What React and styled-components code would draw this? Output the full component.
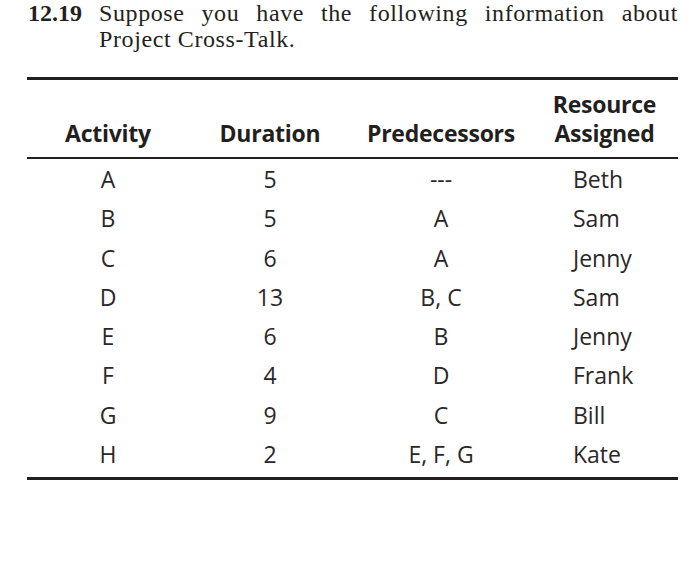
import React from 'react';
import styled, { createGlobalStyle } from 'styled-components';

const GlobalStyle = createGlobalStyle`
  html, body {
    margin: 0;
    padding: 0;
    background: #ffffff;
  }
`;

const Page = styled.div`
  width: 698px;
  height: 564px;
  color: #231f20;
`;

const Problem = styled.div`
  display: flex;
  padding: 0 20px 0 28px;
  font-family: "Liberation Serif", "Times New Roman", serif;
  font-size: 24px;
  line-height: 26px;
  letter-spacing: 0.6px;
`;

const Number = styled.span`
  flex: 0 0 71px;
  font-weight: 700;
  letter-spacing: 0;
`;

const Statement = styled.p`
  flex: 1;
  margin: 0;
  text-align: justify;
`;

const JustifiedLine = styled.span`
  display: block;
  text-align-last: justify;
`;

const Table = styled.div`
  margin: 25px 20px 0 27px;
  width: 651px;
  border-top: 3px solid #231f20;
  border-bottom: 3px solid #231f20;
  padding-bottom: 3px;
  font-family: "Open Sans", "Liberation Sans", sans-serif;
`;

const Row = styled.div`
  display: grid;
  grid-template-columns: 162px 162px 180px 147px;
`;

const HeadRow = styled(Row)`
  align-items: end;
  padding: 10px 0 9px;
  margin-bottom: 1px;
  border-bottom: 2px solid #231f20;
`;

const HeadCell = styled.div`
  font-size: 23px;
  font-weight: 700;
  line-height: 29px;
  letter-spacing: -0.25px;
  text-align: center;
  color: #231f20;
`;

const Cell = styled.div`
  height: 39.3px;
  font-size: 23px;
  line-height: 39.3px;
  font-weight: 400;
  color: #2b2728;
  text-align: ${(p) => (p.$left ? 'left' : 'center')};
  padding-left: ${(p) => (p.$left ? '42px' : '0')};
`;

const activities = [
  { id: 'A', duration: 5, pred: '---', who: 'Beth' },
  { id: 'B', duration: 5, pred: 'A', who: 'Sam' },
  { id: 'C', duration: 6, pred: 'A', who: 'Jenny' },
  { id: 'D', duration: 13, pred: 'B, C', who: 'Sam' },
  { id: 'E', duration: 6, pred: 'B', who: 'Jenny' },
  { id: 'F', duration: 4, pred: 'D', who: 'Frank' },
  { id: 'G', duration: 9, pred: 'C', who: 'Bill' },
  { id: 'H', duration: 2, pred: 'E, F, G', who: 'Kate' },
];

const App = () => (
  <Page>
    <GlobalStyle />
    <Problem>
      <Number>12.19</Number>
      <Statement>
        <JustifiedLine>Suppose you have the following information about</JustifiedLine>
        Project Cross-Talk.
      </Statement>
    </Problem>
    <Table>
      <HeadRow>
        <HeadCell>Activity</HeadCell>
        <HeadCell>Duration</HeadCell>
        <HeadCell>Predecessors</HeadCell>
        <HeadCell>
          Resource
          <br />
          Assigned
        </HeadCell>
      </HeadRow>
      {activities.map((a) => (
        <Row key={a.id}>
          <Cell>{a.id}</Cell>
          <Cell>{a.duration}</Cell>
          <Cell>{a.pred}</Cell>
          <Cell $left>{a.who}</Cell>
        </Row>
      ))}
    </Table>
  </Page>
);

export default App;
